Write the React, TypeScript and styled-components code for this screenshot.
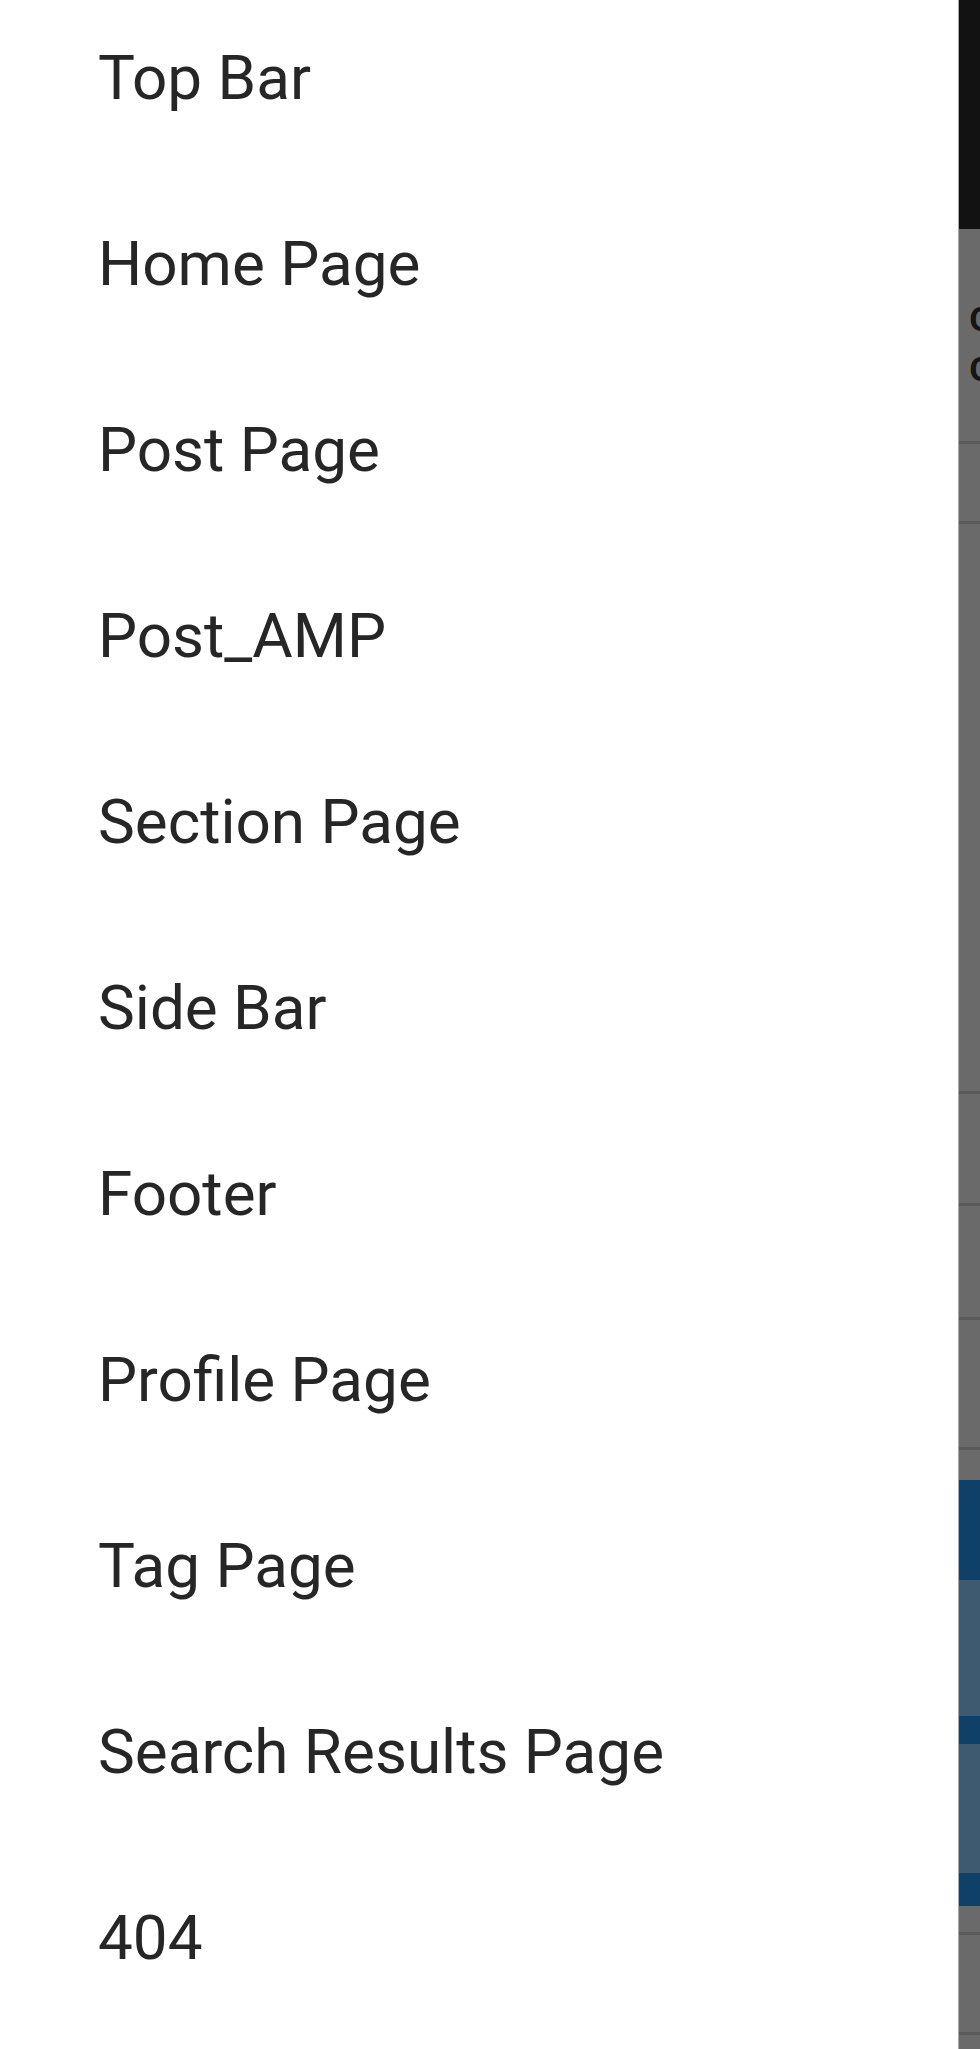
// Dependencies
import React from "react";
import styled, { createGlobalStyle } from "styled-components";

const GlobalStyle = createGlobalStyle`
  html, body {
    margin: 0;
    padding: 0;
    background: #ffffff;
  }
  body {
    font-family: Roboto, "Liberation Sans", Arial, sans-serif;
    -webkit-font-smoothing: antialiased;
  }
`;

const MENU_ITEMS = [
  "Top Bar",
  "Home Page",
  "Post Page",
  "Post_AMP",
  "Section Page",
  "Side Bar",
  "Footer",
  "Profile Page",
  "Tag Page",
  "Search Results Page",
  "404",
];

type Tone = "dark" | "gray" | "navy" | "slate";

// Strip of the page that peeks out behind the drawer
const SEGMENTS: { height: number; tone: Tone; line?: boolean; letters?: boolean }[] = [
  { height: 229, tone: "dark" },
  { height: 215, tone: "gray", line: true, letters: true },
  { height: 80, tone: "gray", line: true },
  { height: 570, tone: "gray", line: true },
  { height: 112, tone: "gray", line: true },
  { height: 114, tone: "gray", line: true },
  { height: 130, tone: "gray", line: true },
  { height: 30, tone: "gray" },
  { height: 100, tone: "navy" },
  { height: 136, tone: "slate" },
  { height: 28, tone: "navy" },
  { height: 129, tone: "slate" },
  { height: 33, tone: "navy" },
  { height: 29, tone: "gray", line: true },
  { height: 100, tone: "gray", line: true },
  { height: 40, tone: "gray" },
];

const toneColors: Record<Tone, string> = {
  dark: "#121212",
  gray: "#6a6a6a",
  navy: "#0f4068",
  slate: "#3e5a70",
};

const Layout = styled.div`
  display: flex;
  width: 100%;
  height: 2049px;
  overflow: hidden;
`;

const Drawer = styled.nav`
  flex: 1;
  background: #ffffff;
`;

const MenuList = styled.ul`
  list-style: none;
  margin: 0;
  padding: 0;
`;

const MenuItem = styled.li`
  height: 186px;
  box-sizing: border-box;
  padding: 42px 0 0 98px;
  font-size: 62px;
  line-height: 72px;
  font-weight: 400;
  color: #262626;
  white-space: nowrap;
`;

const Backdrop = styled.aside`
  width: 21px;
  flex-shrink: 0;
  display: flex;
  flex-direction: column;
  border-left: 1px solid #a8a8a8;
  box-shadow: inset 1px 0 0 #4e4e4e;
  overflow: hidden;
`;

const Segment = styled.div<{ $tone: Tone; $h: number; $line?: boolean }>`
  flex-shrink: 0;
  box-sizing: border-box;
  height: ${(p) => p.$h}px;
  background: ${(p) => toneColors[p.$tone]};
  border-bottom: ${(p) => (p.$line ? "3px solid #5a5a5a" : "none")};
  overflow: hidden;
`;

const Letters = styled.div`
  padding: 62px 0 0 10px;
  font-size: 44px;
  line-height: 50px;
  font-weight: 500;
  color: #151515;
`;

const App = () => {
  return (
    <>
      <GlobalStyle />
      <Layout>
        <Drawer>
          <MenuList>
            {MENU_ITEMS.map((item) => (
              <MenuItem key={item}>{item}</MenuItem>
            ))}
          </MenuList>
        </Drawer>
        <Backdrop>
          {SEGMENTS.map((segment, index) => (
            <Segment
              key={index}
              $tone={segment.tone}
              $h={segment.height}
              $line={segment.line}
            >
              {segment.letters && (
                <Letters>
                  c
                  <br />c
                </Letters>
              )}
            </Segment>
          ))}
        </Backdrop>
      </Layout>
    </>
  );
};

export default App;
